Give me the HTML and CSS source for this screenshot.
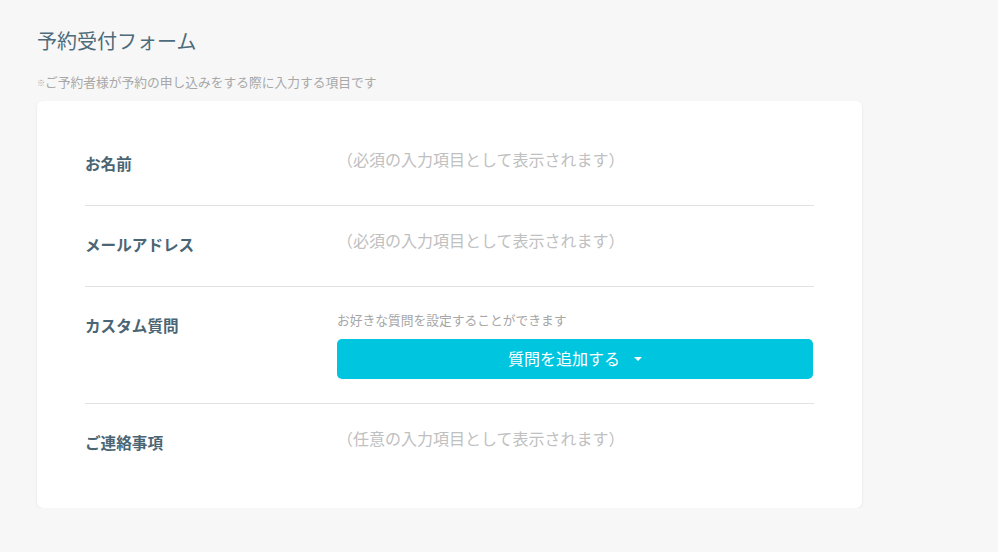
FILE: index.html
```html
<!DOCTYPE html>
<html lang="ja">
<head>
<meta charset="utf-8">
<link rel="stylesheet" href="styles.css">
</head>
<body>
<main class="page">
  <h1 class="title">予約受付フォーム</h1>
  <p class="note"><span class="mark">※</span>ご予約者様が予約の申し込みをする際に入力する項目です</p>
  <section class="card">
    <div class="row">
      <div class="label">お名前</div>
      <div class="field"><span class="placeholder">（必須の入力項目として表示されます）</span></div>
    </div>
    <div class="row">
      <div class="label">メールアドレス</div>
      <div class="field"><span class="placeholder">（必須の入力項目として表示されます）</span></div>
    </div>
    <div class="row">
      <div class="label">カスタム質問</div>
      <div class="field">
        <p class="hint">お好きな質問を設定することができます</p>
        <button class="add-btn" type="button">質問を追加する<span class="caret"></span></button>
      </div>
    </div>
    <div class="row">
      <div class="label">ご連絡事項</div>
      <div class="field"><span class="placeholder">（任意の入力項目として表示されます）</span></div>
    </div>
  </section>
</main>
</body>
</html>
```

FILE: styles.css
```css
html, body {
  margin: 0;
  padding: 0;
  background: #f7f7f7;
}
body {
  font-family: "Noto Sans CJK JP", "Noto Sans", sans-serif;
  color: #4c6876;
}
.page {
  padding: 26px 0 0 37px;
  width: 825px;
}
.title {
  margin: 0;
  font-size: 20px;
  font-weight: 400;
  line-height: 30px;
  color: #4d6b7b;
}
.note {
  margin: 17px 0 0;
  font-size: 12.75px;
  line-height: 18px;
  color: #a8a8a8;
}
.note .mark {
  font-size: 8px;
  vertical-align: 1px;
}
.card {
  margin-top: 9px;
  background: #fff;
  border-radius: 6px;
  box-shadow: 0 1px 3px rgba(0,0,0,0.08);
  padding: 24px 48px 24px 48px;
}
.row {
  display: flex;
  padding: 26px 0 24px;
  border-top: 1px solid #e2e2e2;
}
.row:first-child {
  border-top: none;
}
.label {
  width: 252px;
  flex: none;
  font-size: 15.6px;
  font-weight: 700;
  line-height: 22px;
  padding-top: 1px;
  color: #4a6573;
}
.field {
  flex: 1;
  min-height: 30px;
}
.placeholder {
  display: block;
  font-size: 16px;
  line-height: 16px;
  color: #c0c0c0;
}
.hint {
  margin: 0;
  font-size: 12.75px;
  line-height: 14px;
  color: #a6a6a6;
}
.add-btn {
  margin-top: 12px;
  width: calc(100% - 1px);
  height: 40px;
  border: none;
  border-radius: 5px;
  background: #00c5df;
  color: #fff;
  font-family: inherit;
  font-size: 16px;
  display: flex;
  align-items: center;
  justify-content: center;
  gap: 10px;
  padding: 0 0 2px;
}
.caret {
  width: 0;
  height: 0;
  border-left: 4px solid transparent;
  border-right: 4px solid transparent;
  border-top: 4px solid #fff;
  margin-left: 4px;
  margin-top: 2px;
}
```
